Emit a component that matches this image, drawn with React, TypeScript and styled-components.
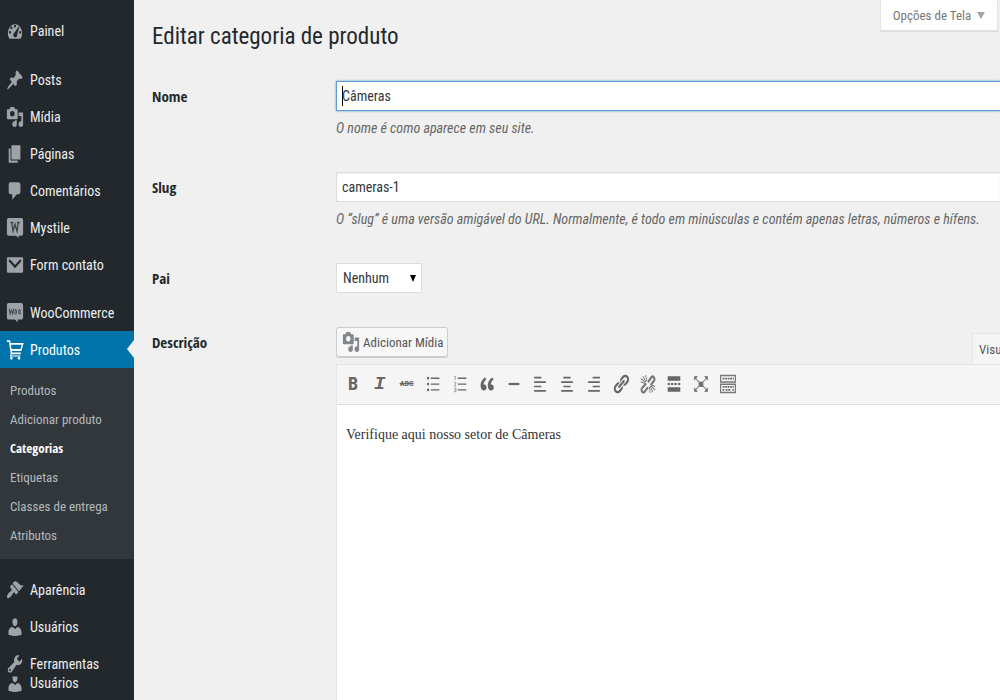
import React from "react";
import styled, { createGlobalStyle, css } from "styled-components";

const sans = `"Roboto Condensed", "Open Sans", "Noto Sans", sans-serif`;
const boldSans = `"Open Sans Condensed", "Open Sans", "Noto Sans", sans-serif`;

const GlobalStyle = createGlobalStyle`
  *, *::before, *::after { box-sizing: border-box; }
  html, body { margin: 0; padding: 0; }
  html, body, #root { height: 100%; }
  body { background: #f0f0f0; color: #32373c; font-family: ${sans}; font-size: 14px; overflow: hidden; }
  button, input, select, textarea { font: inherit; color: inherit; margin: 0; }
`;

const Page = styled.div`
  display: flex;
  min-height: 100vh;
`;

const Sidebar = styled.nav`
  flex: 0 0 134px;
  background: #23282d;
  padding-top: 12px;
  height: 100vh;
  overflow: hidden;
`;

const MenuList = styled.ul<{ $gap: number }>`
  list-style: none;
  margin: 0 0 ${(p) => p.$gap}px;
  padding: 0;
`;

const MenuItem = styled.li<{ $overlap?: boolean }>`
  ${(p) => p.$overlap && css`margin-top: -18px;`}
`;

const MenuLink = styled.a<{ $active?: boolean }>`
  position: relative;
  display: flex;
  align-items: center;
  gap: 6px;
  height: 37px;
  padding-left: 6px;
  color: #eee;
  text-decoration: none;
  white-space: nowrap;
  ${(p) =>
    p.$active &&
    css`
      background: #0073aa;
      color: #fff;
      &::after {
        content: "";
        position: absolute;
        right: 0;
        top: 9px;
        border: solid transparent;
        border-width: 9px 7px 9px 0;
        border-right-color: #f0f0f0;
      }
    `}
`;

const Icon = styled.svg<{ $color?: string }>`
  display: block;
  flex: none;
  width: 18px;
  height: 22px;
  fill: ${(p) => p.$color ?? "#9ea3a8"};
  overflow: visible;
`;

const Submenu = styled.ul`
  list-style: none;
  margin: 0;
  padding: 8px 0 9px;
  background: #32373c;
`;

const SubLink = styled.a<{ $current?: boolean }>`
  display: block;
  padding-left: 10px;
  font-size: 13px;
  line-height: 29px;
  color: #b4b9be;
  text-decoration: none;
  white-space: nowrap;
  ${(p) =>
    p.$current &&
    css`
      color: #fff;
      font-family: ${boldSans};
      font-weight: 700;
    `}
`;

const Main = styled.main`
  flex: 1;
  min-width: 0;
  display: flex;
  flex-direction: column;
  padding-left: 18px;
`;

const Header = styled.header`
  display: flex;
  justify-content: space-between;
  align-items: flex-start;
  padding-right: 2px;
  height: 81px;
`;

const Title = styled.h1`
  margin: 0;
  padding-top: 21px;
  font-size: 23px;
  line-height: 32px;
  font-weight: 400;
  color: #23282d;
`;

const ScreenOptions = styled.button`
  display: flex;
  align-items: center;
  justify-content: center;
  gap: 6px;
  width: 118px;
  height: 31px;
  padding: 0;
  border: 1px solid #e2e2e2;
  border-top: 0;
  background: #fff;
  box-shadow: 0 1px 1px rgba(0, 0, 0, 0.08);
  color: #777;
  font-size: 13px;
  white-space: nowrap;
`;

const Triangle = styled.span`
  border: solid transparent;
  border-width: 7px 4px 0;
  border-top-color: #a0a5aa;
`;

const Form = styled.form`
  flex: 1;
  display: flex;
  flex-direction: column;
`;

const Row = styled.div<{ $height?: number }>`
  display: grid;
  grid-template-columns: 184px minmax(0, 1fr);
  ${(p) => (p.$height ? `height: ${p.$height}px;` : "flex: 1;")}
`;

const Label = styled.label`
  line-height: 30px;
  font-family: ${boldSans};
  font-size: 15px;
  font-weight: 700;
  color: #23282d;
`;

const Field = styled.div`
  display: flex;
  flex-direction: column;
  align-items: stretch;
`;

const TextInput = styled.input<{ $focused?: boolean }>`
  width: 100%;
  height: 30px;
  padding: 0 5px;
  border: 1px solid #ddd;
  border-right: 0;
  border-radius: 0;
  outline: 0;
  background: #fff;
  box-shadow: inset 0 1px 2px rgba(0, 0, 0, 0.07);
  ${(p) =>
    p.$focused &&
    css`
      border-color: #5b9dd9;
      box-shadow: 0 0 2px rgba(30, 140, 190, 0.8);
      background: linear-gradient(#000, #000) 5px center / 1px 20px no-repeat #fff;
    `}
`;

const Help = styled.p`
  margin: 0;
  padding-top: 5px;
  font-size: 14px;
  line-height: 24px;
  font-style: italic;
  color: #666;
  white-space: nowrap;
`;

const SelectBox = styled.span`
  position: relative;
  width: 86px;
  &::after {
    content: "";
    position: absolute;
    right: 6px;
    top: 12px;
    border: solid transparent;
    border-width: 7px 3px 0;
    border-top-color: #000;
  }
`;

const Select = styled.select`
  appearance: none;
  width: 100%;
  height: 30px;
  padding: 0 6px;
  border: 1px solid #ddd;
  border-radius: 0;
  background: #fff;
`;

const EditorTop = styled.div`
  display: flex;
  justify-content: space-between;
  height: 37px;
`;

const MediaButton = styled.button`
  display: flex;
  align-items: center;
  gap: 3px;
  width: 112px;
  height: 30px;
  padding: 0 0 0 5px;
  border: 1px solid #ccc;
  border-radius: 3px;
  background: #f7f7f7;
  box-shadow: 0 1px 0 #ccc;
  color: #555;
  font-size: 13px;
  white-space: nowrap;
`;

const Tab = styled.button`
  align-self: flex-end;
  width: 28px;
  height: 32px;
  margin-bottom: -1px;
  padding: 0 0 0 6px;
  border: 1px solid #e5e5e5;
  border-width: 1px 0 0 1px;
  background: #f5f5f5;
  color: #555;
  font-size: 13px;
  text-align: left;
  overflow: hidden;
`;

const Editor = styled.div`
  flex: 1;
  display: flex;
  flex-direction: column;
  border: 1px solid #e5e5e5;
  border-width: 1px 0 0 1px;
`;

const Toolbar = styled.div`
  background: #f5f5f5;
  border-bottom: 1px solid #ddd;
  padding: 0 7px 1px;
`;

const Tools = styled.div`
  display: flex;
  justify-content: space-between;
  align-items: center;
  width: 393px;
  height: 38px;
`;

const Tool = styled.button`
  display: flex;
  align-items: center;
  justify-content: center;
  width: 18px;
  height: 24px;
  padding: 0;
  border: 0;
  background: none;
  color: #666;
`;

const Glyph = styled.span<{ $kind: "bold" | "italic" | "strike" }>`
  line-height: 22px;
  font-weight: 700;
  ${(p) => p.$kind === "bold" && css`font-size: 18px;`}
  ${(p) => p.$kind === "italic" && css`font: italic 700 19px/22px "Liberation Mono", monospace;`}
  ${(p) => p.$kind === "strike" && css`font-size: 8px; text-decoration: line-through;`}
`;

const Content = styled.textarea`
  flex: 1;
  width: 100%;
  padding: 19px 9px;
  border: 0;
  outline: 0;
  resize: none;
  background: #fff;
  && {
    font: 14px/21px "Liberation Serif", serif;
    color: #333;
  }
`;

type IconName = keyof typeof art;

const art = {
  dashboard: (
    <path
      fillRule="evenodd"
      d="M3.800 17h12.400A8 8 0 1 0 3.800 17zM10 4.500a1.200 1.200 0 1 1 0 2.400 1.200 1.200 0 0 1 0-2.400zM6 6a1.200 1.200 0 1 1 0 2.400 1.200 1.200 0 0 1 0-2.400zM14 6.200l.7.5-2.200 6.300c.4 1.700-.8 2.800-2.300 2.800s-2.600-1.400-1.900-3zM4.500 10a1.200 1.200 0 1 1 0 2.400 1.200 1.200 0 0 1 0-2.400zM15.800 10a1.200 1.200 0 1 1 0 2.400 1.200 1.200 0 0 1 0-2.400z"
    />
  ),
  pin: (
    <path d="M10.44 3.02l1.82-1.82 6.36 6.35-1.83 1.82c-1.05-.68-2.48-.57-3.41.36l-.75.75c-.92.93-1.04 2.35-.35 3.41l-1.83 1.82-2.41-2.41-2.8 2.79c-.42.42-3.38 2.71-3.8 2.29s1.86-3.39 2.28-3.81l2.79-2.79L4.1 9.36l1.83-1.82c1.05.69 2.48.57 3.4-.36l.75-.75c.93-.92 1.05-2.35.36-3.41z" />
  ),
  media: (
    <path
      fillRule="evenodd"
      d="M13 11V4c0-.55-.45-1-1-1h-1.670L9 1H5L3.670 3H2c-.55 0-1 .45-1 1v7c0 .55.45 1 1 1h10c.55 0 1-.45 1-1zM7 4.500a2.500 2.500 0 1 1 0 5 2.500 2.500 0 0 1 0-5zM14 6h5v10.500a2.500 2.500 0 1 1-2-2.450V9h-3V6zm-4 8.050V13h2v3.500a2.500 2.500 0 1 1-2-2.450z"
    />
  ),
  pages: <path d="M6 15V2h10v13H6zm-1 1h8v2H3V5h2v11z" />,
  comment: (
    <path d="M5 2h9c1.100 0 2 .9 2 2v7c0 1.100-.9 2-2 2h-2l-5 5v-5H5c-1.100 0-2-.9-2-2V4c0-1.100.9-2 2-2z" />
  ),
  mystile: (
    <>
      <path d="M3 1h14a2 2 0 0 1 2 2v12a2 2 0 0 1-2 2h-3v2l-3-2H3a2 2 0 0 1-2-2V3a2 2 0 0 1 2-2z" />
      <path d="M6.300 5l1.500 8L10 6.500l2.200 6.500 1.500-8M5 5h3M12.300 5h3" fill="none" stroke="#3c4147" strokeWidth="1.400" />
    </>
  ),
  mail: (
    <>
      <path d="M2 3h16a1 1 0 0 1 1 1v12a1 1 0 0 1-1 1H2a1 1 0 0 1-1-1V4a1 1 0 0 1 1-1z" />
      <path d="M3.500 5.500l6.500 6 6.500-6" fill="none" stroke="#23282d" strokeWidth="2.200" />
    </>
  ),
  woo: (
    <>
      <path d="M3 1h14a2 2 0 0 1 2 2v11a2 2 0 0 1-2 2h-4v2.500L10 16H3a2 2 0 0 1-2-2V3a2 2 0 0 1 2-2z" />
      <path
        d="M3.500 6l1 5L6 7.500 7.500 11l1-5M10.800 6.800c-1.400 1.500-1.200 4 0 4s1.400-3.200 0-4zM15 6.800c-1.400 1.500-1.200 4 0 4s1.400-3.200 0-4z"
        fill="none"
        stroke="#4c5157"
        strokeWidth="1.200"
      />
    </>
  ),
  cart: (
    <>
      <path d="M1 2h3l2 11h10.500M4.500 4.500h14L16.500 10H5.500" fill="none" stroke="#fff" strokeWidth="1.600" />
      <path d="M6 13l-1 2.500h11" fill="none" stroke="#fff" strokeWidth="1" />
      <circle cx="6" cy="17.500" r="1.300" />
      <circle cx="14.500" cy="17.500" r="1.300" />
    </>
  ),
  brush: (
    <path d="M14.480 11.060L7.410 3.990l1.500-1.500c.5-.56 2.300-.47 3.510.32 1.210.8 1.430 1.280 2.910 2.100 1.180.64 2.450 1.260 4.450.85zm-.71.71L6.700 4.700 4.930 6.470c-.39.39-.39 1.020 0 1.410l1.060 1.060c.39.39.39 1.030 0 1.420-.6.6-1.430 1.110-2.210 1.690-.35.26-.7.53-1.010.84C1.430 14.230.4 16.080 1.400 17.070c.99 1 2.840-.03 4.180-1.360.31-.31.58-.66.85-1.020.57-.78 1.080-1.610 1.690-2.210.39-.39 1.020-.39 1.410 0l1.060 1.060c.39.39 1.020.39 1.410 0z" />
  ),
  user: (
    <path d="M10 9.250c-2.270 0-2.730-3.440-2.730-3.440C7 4.020 7.820 2 9.970 2c2.160 0 2.980 2.020 2.710 3.810 0 0-.41 3.440-2.680 3.440zm0 2.570L12.720 10c2.390 0 4.520 2.330 4.520 4.530v2.490s-3.650 1.130-7.240 1.130c-3.650 0-7.240-1.130-7.240-1.130v-2.490c0-2.250 1.940-4.480 4.470-4.480z" />
  ),
  userCropped: (
    <path d="M7.300 4h5.400v1.800s-.4 3.450-2.700 3.450-2.700-3.450-2.700-3.450zM10 11.820L12.720 10c2.390 0 4.520 2.330 4.520 4.530v2.490s-3.650 1.130-7.240 1.130c-3.650 0-7.240-1.130-7.240-1.130v-2.490c0-2.250 1.940-4.480 4.470-4.480z" />
  ),
  wrench: (
    <path
      fillRule="evenodd"
      d="M16.680 9.770c-1.340 1.340-3.300 1.670-4.950.99l-5.410 6.520c-.99.99-2.590.99-3.580 0s-.99-2.590 0-3.570l6.520-5.420c-.68-1.650-.35-3.610.99-4.950 1.280-1.280 3.120-1.620 4.720-1.060l-2.890 2.890 2.820 2.820 2.860-2.870c.53 1.580.18 3.390-1.080 4.650zM3.810 16.210c.4.39 1.040.39 1.430 0 .4-.4.4-1.040 0-1.430-.39-.4-1.030-.4-1.430 0-.39.39-.39 1.030 0 1.430z"
    />
  ),
  bullets: (
    <path d="M7.500 4.200H17v1.200H7.500zM7.500 9.500H17v1.200H7.500zM7.500 14.800H17V16H7.500zM4.500 3.500a1.300 1.300 0 1 1 0 2.600 1.300 1.300 0 0 1 0-2.600zM4.500 8.800a1.300 1.300 0 1 1 0 2.600 1.300 1.300 0 0 1 0-2.600zM4.500 14.100a1.300 1.300 0 1 1 0 2.600 1.300 1.300 0 0 1 0-2.600z" />
  ),
  numbers: (
    <>
      <path d="M7.500 4.200H17v1.200H7.500zM7.500 9.500H17v1.200H7.500zM7.500 14.800H17V16H7.500z" />
      <path
        d="M3.600 3.400l1.100-.6v3.700M3.300 8.500h2v1.500l-1.800 1.800h2.300M3.300 13.700h2.200v3.300H3.300M3.800 15.300h1.700"
        fill="none"
        stroke="#999"
        strokeWidth=".9"
      />
    </>
  ),
  quote: (
    <path d="M9.490 13.220c0-.74-.2-1.380-.61-1.900-.62-.78-1.830-.88-2.530-.72-.29-1.650 1.110-3.750 2.920-4.650L7.880 4c-2.730 1.300-5.420 4.280-4.960 8.050C3.210 14.430 4.590 16 6.540 16c.85 0 1.560-.25 2.120-.75s.83-1.180.83-2.030zm8.050 0c0-.74-.2-1.380-.61-1.900-.63-.78-1.830-.88-2.530-.72-.29-1.650 1.110-3.750 2.920-4.650L15.930 4c-2.730 1.300-5.410 4.280-4.950 8.050.29 2.380 1.660 3.950 3.610 3.950.85 0 1.560-.25 2.120-.75s.83-1.180.83-2.030z" />
  ),
  rule: <path d="M4 9h12v2H4z" />,
  alignLeft: <path d="M3.500 3.500h8V5h-8zM3.500 7.500h13V9h-13zM3.500 11.500h8V13h-8zM3.500 15.500h13V17h-13z" />,
  alignCenter: <path d="M6 3.500h8V5H6zM3.500 7.500h13V9h-13zM6 11.500h8V13H6zM3.500 15.500h13V17h-13z" />,
  alignRight: <path d="M8.500 3.500h8V5h-8zM3.500 7.500h13V9h-13zM8.500 11.500h8V13h-8zM3.500 15.500h13V17h-13z" />,
  link: (
    <path d="M17.740 2.760c1.680 1.690 1.680 4.410 0 6.100l-1.530 1.520c-1.120 1.120-2.700 1.470-4.140 1.090l2.620-2.610.76-.77.76-.76c.84-.84.84-2.200 0-3.040-.84-.85-2.200-.85-3.040 0l-.77.76-3.380 3.380c-.37-1.440-.02-3.020 1.100-4.140l1.520-1.530c1.690-1.680 4.420-1.680 6.100 0zM8.590 13.430l5.340-5.340c.42-.42.42-1.100 0-1.520-.44-.43-1.130-.39-1.530 0l-5.330 5.340c-.42.42-.42 1.100 0 1.520.44.43 1.130.39 1.520 0zm-.76 2.290l4.140-4.150c.38 1.440.03 3.020-1.090 4.140l-1.520 1.530c-1.690 1.680-4.410 1.680-6.100 0-1.680-1.680-1.680-4.420 0-6.100l1.530-1.520c1.120-1.120 2.700-1.470 4.140-1.100l-4.140 4.150c-.85.84-.85 2.200 0 3.050.84.84 2.200.84 3.040 0z" />
  ),
  unlink: (
    <>
      <path
        d="M10 8.500l3.800-4.700c1.700-1.500 4.500.9 3 3.200L13 11M8 9.500L3.200 14c-1.500 2 .8 4.500 2.800 3.300L10 13"
        fill="none"
        stroke="#777"
        strokeWidth="2.200"
      />
      <path
        d="M8.500 7.500L7.500 2M7.500 8L4.500 3M7 8.500L2 5M6.500 9.500L2 8M11.500 12.500l1 5.500M12.500 12l3 5.500M13 11.500l5 4M13.500 10.500l4.500 2"
        fill="none"
        stroke="#777"
        strokeWidth="1"
      />
    </>
  ),
  more: <path d="M3 3h14v4H3zM3 9.200h2.500v1.600H3zM6.800 9.200h2.500v1.600H6.800zM10.600 9.200h2.500v1.600h-2.500zM14.500 9.200H17v1.600h-2.500zM3 13h14v4H3z" />,
  expand: (
    <>
      <path d="M7.500 8h5v4.500h-5zM2.500 3h4L2.500 7zM17.500 3h-4l4 4zM2.500 17h4l-4-4zM17.500 17h-4l4-4z" />
      <path d="M3 4l14 12M17 4L3 16" stroke="#777" strokeWidth="1" />
    </>
  ),
  keyboard: (
    <>
      <path d="M1.800 2.200h16.400v6H1.800zM1.800 10.200h16.400v7.600H1.800z" fill="none" stroke="#777" strokeWidth="1.300" />
      <path
        d="M4 5.200h12.500M4 12.600h12.500M4 15.400h2M7.500 15.400h6M15 15.400h1.500"
        fill="none"
        stroke="#666"
        strokeWidth="1.600"
        strokeDasharray="2 .8"
      />
    </>
  ),
};

function Pic({ name, color }: { name: IconName; color?: string }) {
  return (
    <Icon viewBox="0 0 20 20" preserveAspectRatio="none" $color={color} aria-hidden="true">
      {art[name]}
    </Icon>
  );
}

type Entry = { icon: IconName; text: string; active?: boolean; overlap?: boolean };

const groups: { gap: number; items: Entry[] }[] = [
  { gap: 12, items: [{ icon: "dashboard", text: "Painel" }] },
  {
    gap: 11,
    items: [
      { icon: "pin", text: "Posts" },
      { icon: "media", text: "Mídia" },
      { icon: "pages", text: "Páginas" },
      { icon: "comment", text: "Comentários" },
      { icon: "mystile", text: "Mystile" },
      { icon: "mail", text: "Form contato" },
    ],
  },
  {
    gap: 12,
    items: [
      { icon: "woo", text: "WooCommerce" },
      { icon: "cart", text: "Produtos", active: true },
    ],
  },
  {
    gap: 0,
    items: [
      { icon: "brush", text: "Aparência" },
      { icon: "user", text: "Usuários" },
      { icon: "wrench", text: "Ferramentas" },
      { icon: "userCropped", text: "Usuários", overlap: true },
    ],
  },
];

const submenu = ["Produtos", "Adicionar produto", "Categorias", "Etiquetas", "Classes de entrega", "Atributos"];

const tools: { icon: IconName; label: string }[] = [
  { icon: "bullets", label: "Lista com marcadores" },
  { icon: "numbers", label: "Lista numerada" },
  { icon: "quote", label: "Citação" },
  { icon: "rule", label: "Linha horizontal" },
  { icon: "alignLeft", label: "Alinhar à esquerda" },
  { icon: "alignCenter", label: "Centralizar" },
  { icon: "alignRight", label: "Alinhar à direita" },
  { icon: "link", label: "Inserir link" },
  { icon: "unlink", label: "Remover link" },
  { icon: "more", label: "Leia mais" },
  { icon: "expand", label: "Tela cheia" },
  { icon: "keyboard", label: "Alternar barra" },
];

export default function App() {
  return (
    <>
      <GlobalStyle />
      <Page>
        <Sidebar>
          {groups.map((group, i) => (
            <MenuList key={i} $gap={group.gap}>
              {group.items.map((item, j) => (
                <MenuItem key={j} $overlap={item.overlap}>
                  <MenuLink href="#" $active={item.active}>
                    <Pic name={item.icon} color={item.active ? "#fff" : undefined} />
                    {item.text}
                  </MenuLink>
                  {item.active && (
                    <Submenu>
                      {submenu.map((text) => (
                        <li key={text}>
                          <SubLink href="#" $current={text === "Categorias"}>
                            {text}
                          </SubLink>
                        </li>
                      ))}
                    </Submenu>
                  )}
                </MenuItem>
              ))}
            </MenuList>
          ))}
        </Sidebar>
        <Main>
          <Header>
            <Title>Editar categoria de produto</Title>
            <ScreenOptions type="button">
              Opções de Tela
              <Triangle />
            </ScreenOptions>
          </Header>
          <Form>
            <Row $height={91}>
              <Label htmlFor="name">Nome</Label>
              <Field>
                <TextInput id="name" type="text" defaultValue="Câmeras" $focused />
                <Help>O nome é como aparece em seu site.</Help>
              </Field>
            </Row>
            <Row $height={91}>
              <Label htmlFor="slug">Slug</Label>
              <Field>
                <TextInput id="slug" type="text" defaultValue="cameras-1" />
                <Help>
                  O “slug” é uma versão amigável do URL. Normalmente, é todo em minúsculas e contém apenas letras,
                  números e hífens.
                </Help>
              </Field>
            </Row>
            <Row $height={64}>
              <Label htmlFor="parent">Pai</Label>
              <Field>
                <SelectBox>
                  <Select id="parent">
                    <option>Nenhum</option>
                  </Select>
                </SelectBox>
              </Field>
            </Row>
            <Row>
              <Label htmlFor="description">Descrição</Label>
              <Field>
                <EditorTop>
                  <MediaButton type="button">
                    <Pic name="media" color="#82878c" />
                    Adicionar Mídia
                  </MediaButton>
                  <Tab type="button">Visual</Tab>
                </EditorTop>
                <Editor>
                  <Toolbar>
                    <Tools>
                      <Tool type="button" aria-label="Negrito">
                        <Glyph $kind="bold">B</Glyph>
                      </Tool>
                      <Tool type="button" aria-label="Itálico">
                        <Glyph $kind="italic">I</Glyph>
                      </Tool>
                      <Tool type="button" aria-label="Riscado">
                        <Glyph $kind="strike">ABC</Glyph>
                      </Tool>
                      {tools.map((tool) => (
                        <Tool key={tool.icon} type="button" aria-label={tool.label}>
                          <Pic name={tool.icon} color="#666" />
                        </Tool>
                      ))}
                    </Tools>
                  </Toolbar>
                  <Content id="description" defaultValue="Verifique aqui nosso setor de Câmeras" />
                </Editor>
              </Field>
            </Row>
          </Form>
        </Main>
      </Page>
    </>
  );
}
